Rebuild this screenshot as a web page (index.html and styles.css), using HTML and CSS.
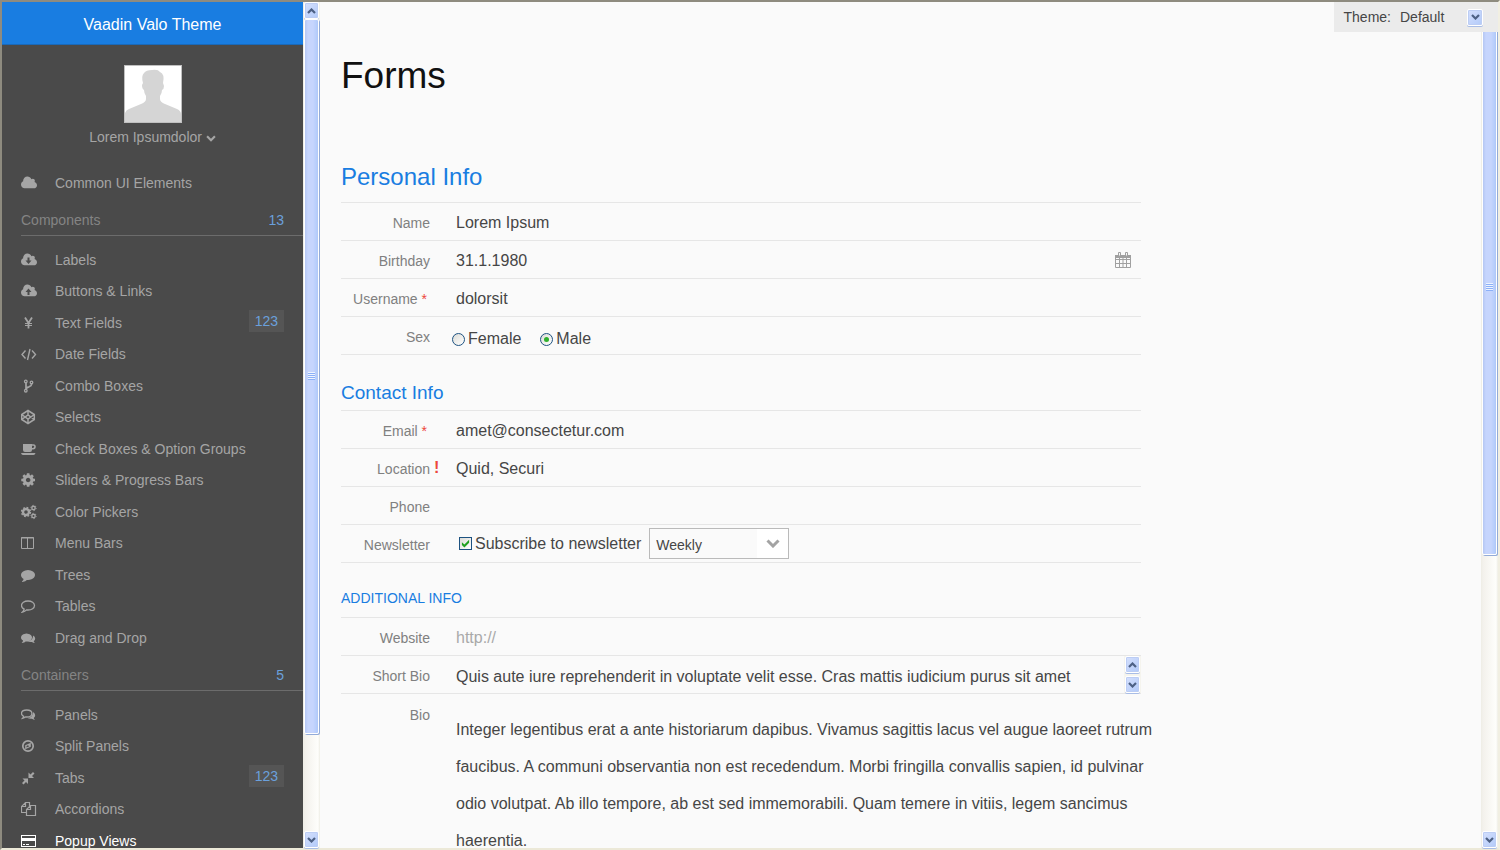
FILE: index.html
```html
<!DOCTYPE html>
<html lang="en">
<head>
<meta charset="utf-8">
<title>Vaadin Valo Theme</title>
<link rel="stylesheet" href="styles.css">
</head>
<body>
<svg class="defs" aria-hidden="true">
  <symbol id="cloud" viewBox="64 0 1920 1792"><path d="M1984 1152q0 159-112.500 271.500t-271.500 112.500h-1088q-185 0-316.500-131.500t-131.500-316.500q0-132 71-241.500t187-163.500q-2-28-2-43 0-212 150-362t362-150q158 0 286.500 88t187.500 230q70-62 166-62 106 0 181 75t75 181q0 75-41 138 129 30 213 134.500t84 239.500z"/></symbol>
  <symbol id="up" viewBox="0 0 9 6"><path d="M1 5l3.500-3.500L8 5" fill="none" stroke="#4d6185" stroke-width="2.200"/></symbol>
  <symbol id="down" viewBox="0 0 9 6"><path d="M1 1l3.500 3.500L8 1" fill="none" stroke="#4d6185" stroke-width="2.200"/></symbol>
  <symbol id="chevron" viewBox="0 0 14 9"><path d="M1.500 1.500L7 7l5.500-5.500" fill="none" stroke="currentColor" stroke-width="3"/></symbol>
  <symbol id="comment" viewBox="0 0 1792 1792"><path d="M1792 896q0 174-120 321.500t-326 233-450 85.500q-70 0-145-8-198 175-460 242-49 14-114 22h-5q-15 0-27-10.500t-16-27.500v-1q-3-4-.5-12t2-10 4.500-9.500l6-9 7-8.500 8-9q7-8 31-34.500t34.500-38 31-39.500 32.500-51 27-59 26-76q-157-89-247.500-220t-90.500-281q0-130 71-248.500t191-204.500 286-136.500 348-50.500 348 50.500 286 136.500 191 204.500 71 248.500z"/></symbol>
</svg>
<div class="app">
  <aside class="sidebar">
    <header class="brand">Vaadin Valo Theme</header>
    <div class="profile">
      <svg class="avatar" viewBox="0 0 56 56" role="img" aria-label="Profile"><path fill="#fff" d="M0 0h56v56H0z"/><path fill="#d5d5d5" d="M0 56V47q1-3 4-4l12-5q5-2 5-5v-3q-2-3-2-6-2-1-2-5l1-2q-2-7 1-10 2-3 8-3 6-1 8 2 5 2 3 11l1 3q0 3-2 4 0 3-2 6v3q0 3 5 5l12 5q4 2 4 5v8z"/></svg>
      <button class="user">Lorem Ipsumdolor <svg class="caret"><use href="#chevron"/></svg></button>
    </div>
    <nav>
      <ul class="menu">
        <li><a href="#"><svg class="icon"><use href="#cloud"/></svg>Common UI Elements</a></li>
      </ul>
      <h2 class="group">Components <span class="count">13</span></h2>
      <ul class="menu grouped">
        <li><a href="#"><svg class="icon" viewBox="0 0 16 16"><use href="#cloud" width="16" height="16"/><path fill="#4a4a4a" d="M6.500 5.500h2v3h2L7.500 12l-3-3.500h2z"/></svg>Labels</a></li>
        <li><a href="#"><svg class="icon" viewBox="0 0 16 16"><use href="#cloud" width="16" height="16"/><path fill="#4a4a4a" d="M6.500 12h2V9h2l-3-3.500-3 3.500h2z"/></svg>Buttons &amp; Links</a></li>
        <li><a href="#"><svg class="icon" viewBox="0 0 16 16"><path class="line" stroke-width="1.800" d="M4 2.500l3.500 5.500L11 2.500M7.500 8v5.500"/><path class="line" d="M4 8.500h7M4 10.500h7"/></svg>Text Fields</a><span class="badge">123</span></li>
        <li><a href="#"><svg class="icon" viewBox="0 0 16 16"><path class="line" stroke-width="1.400" d="M4.500 4.500L1 8.500l3.500 4M11 4.500l3.500 4-3.500 4M9 3L6.500 14"/></svg>Date Fields</a></li>
        <li><a href="#"><svg class="icon" viewBox="0 0 16 16"><path class="line" stroke-width="1.700" d="M5 4v8M10.500 5v1.500Q10.500 8 8 8.800 5 9.500 5 12"/><g class="line" stroke-width="1.300"><circle cx="4.800" cy="3.500" r="1.300"/><circle cx="10.500" cy="4.500" r="1.300"/><circle cx="4.800" cy="12.700" r="1.300"/></g></svg>Combo Boxes</a></li>
        <li><a href="#"><svg class="icon" viewBox="0 0 16 16"><path class="line" stroke-width="1.500" d="M7 1.500l6.300 4v5L7 14.500l-6.300-4v-5zM.7 5.500L7 10l6.300-4.500M.7 10.500L7 6l6.300 4.500M7 1.500V6M7 10v4.500"/></svg>Selects</a></li>
        <li><a href="#"><svg class="icon" viewBox="0 0 16 16"><path d="M2 3h9v6q0 2-2 2H4q-2 0-2-2zM0 12h14.500q-.5 2-2 2H2Q.5 14 0 12z"/><path class="line" stroke-width="1.600" d="M11 4h1.500q1.500 0 1.500 1.800t-2 2H11"/></svg>Check Boxes &amp; Option Groups</a></li>
        <li><a href="#"><svg class="icon" viewBox="96 0 1792 1792"><path d="M1152 896q0-106-75-181t-181-75-181 75-75 181 75 181 181 75 181-75 75-181zm512-109v222q0 12-8 23t-20 13l-185 28q-19 54-39 91 35 50 107 138 10 12 10 25t-9 23q-27 37-99 108t-94 71q-12 0-26-9l-138-108q-44 23-91 38-16 136-29 186-7 28-36 28h-222q-14 0-24.500-8.500t-11.500-21.500l-28-184q-49-16-90-37l-141 107q-10 9-25 9-14 0-25-11-126-114-165-168-7-10-7-23 0-12 8-23 15-21 51-66.500t54-70.500q-27-50-41-99l-183-27q-13-2-21-12.500t-8-23.500v-222q0-12 8-23t19-13l186-28q14-46 39-92-40-57-107-138-10-12-10-24 0-10 9-23 26-36 98.500-107.500t94.500-71.500q13 0 26 10l138 107q44-23 91-38 16-136 29-186 7-28 36-28h222q14 0 24.500 8.500t11.500 21.500l28 184q49 16 90 37l142-107q9-9 24-9 13 0 25 10 129 119 165 170 7 8 7 22 0 12-8 23-15 21-51 66.500t-54 70.500q26 50 41 98l183 28q13 2 21 12.500t8 23.500z"/></svg>Sliders &amp; Progress Bars</a></li>
        <li><a href="#"><svg class="icon" viewBox="0 0 16 16"><g class="line"><circle cx="5" cy="8" r="3" stroke-width="2.400"/><circle cx="5" cy="8" r="4.500" stroke-width="1.400" stroke-dasharray="1.800 1.734"/><circle cx="12.500" cy="4" r="1.700" stroke-width="1.400"/><circle cx="12.500" cy="4" r="2.700" stroke-width=".9" stroke-dasharray="1.200 1.630"/><circle cx="12.500" cy="12" r="1.700" stroke-width="1.400"/><circle cx="12.500" cy="12" r="2.700" stroke-width=".9" stroke-dasharray="1.200 1.630"/></g></svg>Color Pickers</a></li>
        <li><a href="#"><svg class="icon" viewBox="0 0 16 16"><path class="line" d="M.5 2.500h12v11H.5zM6.500 3v10M0 3h13"/></svg>Menu Bars</a></li>
        <li><a href="#"><svg class="icon" viewBox="0 0 16 16"><use href="#comment" y="1" width="14" height="14"/></svg>Trees</a></li>
        <li><a href="#"><svg class="icon" viewBox="0 0 16 16"><path class="line" stroke-width="1.300" d="M7 3c3.700 0 6.500 2 6.500 4.500S10.700 12 7 12l-1.500-.1Q4 13.400 1.500 14 3 12.500 3.200 11.200.5 9.800.5 7.500C.5 5 3.300 3 7 3z"/></svg>Tables</a></li>
        <li><a href="#"><svg class="icon" viewBox="0 0 16 16"><use href="#comment" y="2" width="11" height="11"/><path d="M12 5.500q2.200 1 2.200 3 0 1.700-1.500 2.700.3 1 1.300 1.900-1.800-.2-3.100-1.200-2.700.3-4.400-.9 5-.5 5.500-4.500z"/></svg>Drag and Drop</a></li>
      </ul>
      <h2 class="group">Containers <span class="count">5</span></h2>
      <ul class="menu grouped">
        <li><a href="#"><svg class="icon" viewBox="0 0 16 16"><path class="line" stroke-width="1.300" d="M5.700 3c3 0 5.200 1.500 5.200 3.500S8.700 10 5.700 10l-1.200-.1Q3.500 11 1.500 11.400q1-1 1.200-2Q.5 8.300.5 6.500C.5 4.500 2.700 3 5.700 3z"/><path d="M12 5q2.200 1.200 2.200 3.300 0 1.700-1.500 2.700.3 1 1.300 1.900-1.800-.2-3.100-1.200-2.700.3-4.400-.7 5.500-.5 5.500-6z"/></svg>Panels</a></li>
        <li><a href="#"><svg class="icon" viewBox="0 0 16 16"><circle class="line" cx="7" cy="8" r="5.200" stroke-width="1.700"/><path d="M9.800 4.800v3.900l-5.600 2.500V7.300zM6.900 7.200L5.500 8v1.600l2.800-1.300z" fill-rule="evenodd"/></svg>Split Panels</a></li>
        <li><a href="#"><svg class="icon" viewBox="0 0 16 16"><path d="M7 8.500V14l-2-2-2.500 2.500L1 13l2.500-2.500-2-2zM7.500 8V2.500l2 2L12 2l1.500 1.500L11 6l2 2z"/></svg>Tabs</a><span class="badge">123</span></li>
        <li><a href="#"><svg class="icon" viewBox="0 0 16 16"><path class="line" stroke-width="1.200" d="M8.500 5V1.500h-4l-4 4v6H5M4.500 1.500v4h-4M9.500 4.500h5v10h-9v-6zM9.500 4.500v4h-4"/></svg>Accordions</a></li>
        <li><a class="current" href="#"><svg class="icon" viewBox="0 0 16 16"><path fill-rule="evenodd" d="M0 2h15v12H0zM1 3v2h13V3zM1 8v5h13V8z"/><path d="M2 11h2v1H2zM5 11h3v1H5z"/></svg>Popup Views</a></li>
      </ul>
    </nav>
  </aside>
  <div class="scrollbar">
    <button class="step" aria-label="Scroll menu up"><svg><use href="#up"/></svg></button>
    <div class="track"><div class="thumb menu-thumb"><i class="grip"></i></div></div>
    <button class="step" aria-label="Scroll menu down"><svg><use href="#down"/></svg></button>
  </div>
  <main class="content">
    <form class="form">
      <h1>Forms</h1>
      <h2>Personal Info</h2>
      <div class="rows">
        <div class="row"><label for="name">Name</label><input class="text" id="name" value="Lorem Ipsum"></div>
        <div class="row"><label for="birthday">Birthday</label>
          <div class="field"><input class="text" id="birthday" value="31.1.1980">
            <button type="button" class="calendar" aria-label="Open calendar"><svg viewBox="0 0 16 16"><path d="M.5 3.500h15v12H.5zM.5 7.500h15M.5 11.500h15M4.500 6v9.500M8 6v9.500M11.500 6v9.500" class="line"/><path d="M0 3h16v3H0z"/><path d="M3.500.5h2V4h-2zM10.500.5h2V4h-2z" fill="#fafafa" stroke="currentColor"/></svg></button></div></div>
        <div class="row"><label for="username">Username <span class="required">*</span></label><input class="text" id="username" value="dolorsit" required></div>
        <div class="row"><span class="label" id="sex">Sex</span>
          <div class="options" role="radiogroup" aria-labelledby="sex">
            <label class="option"><input type="radio" name="sex">Female</label>
            <label class="option"><input type="radio" name="sex" checked>Male</label>
          </div></div>
      </div>
      <h3>Contact Info</h3>
      <div class="rows">
        <div class="row"><label for="email">Email <span class="required">*</span></label><input class="text" id="email" value="amet@consectetur.com" required></div>
        <div class="row"><label for="location">Location</label><span class="error">!</span><input class="text" id="location" value="Quid, Securi"></div>
        <div class="row"><label for="phone">Phone</label><input class="text" id="phone"></div>
        <div class="row"><span class="label">Newsletter</span>
          <div class="field">
            <label class="option subscribe"><input type="checkbox" checked>Subscribe to newsletter</label>
            <div class="combo"><select aria-label="Frequency"><option>Weekly</option></select><span class="combo-arrow"><svg><use href="#chevron"/></svg></span></div>
          </div></div>
      </div>
      <h4>ADDITIONAL INFO</h4>
      <div class="rows open">
        <div class="row"><label for="website">Website</label><input class="text" id="website" placeholder="http://"></div>
        <div class="row"><label for="short">Short Bio</label>
          <div class="field"><textarea class="text" id="short" rows="1">Quis aute iure reprehenderit in voluptate velit esse. Cras mattis iudicium purus sit amet</textarea>
            <div class="spinner"><button type="button" class="step" aria-label="Scroll up"><svg><use href="#up"/></svg></button><button type="button" class="step" aria-label="Scroll down"><svg><use href="#down"/></svg></button></div></div></div>
        <div class="row bio"><span class="label">Bio</span><p>Integer legentibus erat a ante historiarum dapibus. Vivamus sagittis lacus vel augue laoreet rutrum<br>faucibus. A communi observantia non est recedendum. Morbi fringilla convallis sapien, id pulvinar<br>odio volutpat. Ab illo tempore, ab est sed immemorabili. Quam temere in vitiis, legem sancimus<br>haerentia.</p></div>
      </div>
    </form>
  </main>
  <div class="scrollbar">
    <button class="step" aria-label="Scroll page up"><svg><use href="#up"/></svg></button>
    <div class="track"><div class="thumb page-thumb"><i class="grip"></i></div></div>
    <button class="step" aria-label="Scroll page down"><svg><use href="#down"/></svg></button>
  </div>
  <div class="theme"><label for="theme">Theme:</label><select id="theme"><option>Default</option></select><span class="theme-arrow step"><svg><use href="#down"/></svg></span></div>
</div>
</body>
</html>
```

FILE: styles.css
```css
* { box-sizing: border-box; }
body {
  margin: 0;
  font: 16px/20px "Liberation Sans", Arial, sans-serif;
  color: #464646;
  background: #fafafa;
}
button, input, select, textarea { font: inherit; color: inherit; }
button { padding: 0; border: 0; background: none; }
h1, h2, h3, h4, p, ul { margin: 0; padding: 0; font-weight: normal; }
ul { list-style: none; }
svg { fill: currentColor; }
.defs { position: absolute; width: 0; height: 0; }
.line { fill: none; stroke: currentColor; }

.app {
  position: relative;
  display: grid;
  grid-template-columns: 301px 17px 1fr 17px;
  grid-template-rows: minmax(0, 1fr);
  height: 100vh;
  border: 2px solid #8e8b7f;
  border-right-color: #f1efe2;
  border-bottom-color: #ece9d8;
}

/* Sidebar */
.sidebar {
  overflow: auto;
  scrollbar-width: none;
  background: #4a4a4a;
  color: #a5a5a5;
  font-size: 14px;
}
.brand {
  height: 43px;
  line-height: 45px;
  border-bottom: 1px solid #1a69b8;
  background: #197de1;
  color: #fff;
  font-size: 16px;
  text-align: center;
}
.profile {
  display: flex;
  flex-direction: column;
  align-items: center;
  padding: 20px 0;
}
.avatar { width: 58px; height: 58px; border: 1px solid #c0c0c0; }
.user { margin-top: 4px; }
.caret { width: 10px; height: 7px; }
.menu li {
  display: flex;
  align-items: center;
  justify-content: space-between;
  height: 32px;
  padding: 0 19px;
}
.menu.grouped { padding: 8px 0 1px; }
.grouped li:nth-child(odd) { height: 31px; }
.menu a {
  display: flex;
  align-items: center;
  gap: 18px;
  color: inherit;
  text-decoration: none;
}
.menu .current { color: #fff; }
.icon { width: 16px; height: 16px; }
.badge {
  margin-bottom: 3px;
  padding: 1px 6px;
  background: #555;
  color: #6ba0dc;
}
.group {
  display: flex;
  justify-content: space-between;
  margin-left: 19px;
  padding: 11px 19px 5px 0;
  border-bottom: 1px solid #6c6c6c;
  color: #848484;
  font-size: 14px;
}
.count { color: #6ba0dc; }

/* Scrollbars */
.scrollbar {
  display: flex;
  flex-direction: column;
  padding: 0 1px;
  background: linear-gradient(90deg, #eeede5, #f3f1ec 2px, #fefefb 15px, #eeede5);
}
.track { flex: 1; }
.thumb {
  display: grid;
  place-items: center;
  border: 1px solid #fff;
  border-radius: 2px;
  background: linear-gradient(90deg, #b5c7f3, #c6d5fd 3px, #c6d5fd 8px, #b4ccfb 12px, #afc6f5);
  box-shadow: 1px 1px #93abd8;
}
.menu-thumb { height: 88%; }
.page-thumb { height: 66%; }
.grip {
  width: 7px;
  height: 8px;
  background: repeating-linear-gradient(#eef4fe 0 1px, #8cb0f8 1px 2px);
}
.step {
  display: grid;
  place-items: center;
  flex: none;
  width: 15px;
  height: 17px;
  border: 1px solid #fff;
  border-radius: 2px;
  background: linear-gradient(135deg, #d5e0fd, #b2caf9);
  box-shadow: inset 0 0 0 1px #bccdf4, 0 1px #a9bde6;
}
.step svg { width: 9px; height: 6px; }

/* Theme picker over the page corner */
.theme {
  position: absolute;
  top: 0;
  right: 0;
  display: flex;
  align-items: center;
  height: 30px;
  padding: 0 15px 0 10px;
  background: #ebebeb;
  font-size: 14px;
}
.theme select {
  appearance: none;
  width: 67px;
  margin-left: 9px;
  padding: 0;
  border: 0;
  background: none;
}
.theme-arrow { width: 16px; pointer-events: none; }

/* Form */
.content { overflow: auto; scrollbar-width: none; padding: 54px 21px 0; }
.form { max-width: 800px; }
h1 { margin-bottom: 66px; color: #111; font-size: 37px; line-height: 40px; }
.form h2, h3, h4 { color: #197de1; }
.form h2 { margin-bottom: 10px; font-size: 24px; line-height: 30px; }
h3 { margin: 26px 0 5px; font-size: 19px; line-height: 24px; }
h4 { margin: 25px 0 9px; font-size: 14px; line-height: 20px; }
.rows { border-bottom: 1px solid #e6e6e6; }
.open { border-bottom: 0; }
.row {
  display: grid;
  grid-template-columns: 89px 22px 1fr;
  align-items: center;
  min-height: 38px;
  border-top: 1px solid #e6e6e6;
}
.row > label, .label {
  grid-column: 1;
  padding-top: 2px;
  color: #808080;
  font-size: 14px;
  text-align: right;
}
.required { padding-right: 3px; color: #ed473b; }
.error { grid-column: 2; padding-left: 4px; color: #ed473b; font-weight: bold; }
.row > .text, .field, .options, .row p { grid-column: 3; }
.text {
  flex: 1;
  width: 100%;
  height: 37px;
  padding: 2px 4px 0;
  border: 0;
  outline: 0;
  background: none;
}
.text::placeholder { color: #a9a9a9; }
textarea.text { resize: none; overflow: hidden; padding: 11px 4px 0; }
.field { display: flex; align-items: center; }
.calendar { margin-right: 10px; color: #a0a0a0; }
.calendar svg { display: block; width: 16px; height: 16px; }
.options { display: flex; gap: 19px; padding-top: 7px; }
.option { display: flex; align-items: center; gap: 3px; }
.option input {
  appearance: none;
  display: grid;
  place-items: center;
  width: 13px;
  height: 13px;
  margin: 0;
  border: 1px solid #1d5281;
  background: linear-gradient(135deg, #dcdcd7, #fff);
}
.option input[type="radio"] { border-radius: 50%; }
.option input[type="radio"]:checked::before {
  content: "";
  width: 5px;
  height: 5px;
  border-radius: 50%;
  background: #2fb02d;
}
.option input[type="checkbox"]:checked::before {
  content: "";
  width: 9px;
  height: 9px;
  background: #21a121;
  clip-path: polygon(10% 35%, 38% 62%, 90% 8%, 90% 42%, 38% 95%, 10% 68%);
}
.subscribe { padding-left: 7px; }
.combo { position: relative; margin-left: 8px; }
.combo select {
  appearance: none;
  display: block;
  width: 140px;
  height: 31px;
  padding: 2px 38px 0 6px;
  border: 1px solid #bababa;
  border-radius: 0;
  background: #fafafa;
  font-size: 14px;
}
.combo-arrow {
  position: absolute;
  inset: 1px 1px 1px auto;
  display: grid;
  place-items: center;
  width: 31px;
  background: #fff;
  color: #a3a3a3;
  pointer-events: none;
}
.combo-arrow svg { width: 14px; height: 9px; }
.spinner {
  display: grid;
  gap: 3px;
  width: 17px;
  padding: 0 1px;
  background: #f5f4ee;
}
.bio { align-items: start; }
.bio .label { padding-top: 11px; }
.bio p { padding: 17px 4px 0; line-height: 37px; white-space: nowrap; }
```
